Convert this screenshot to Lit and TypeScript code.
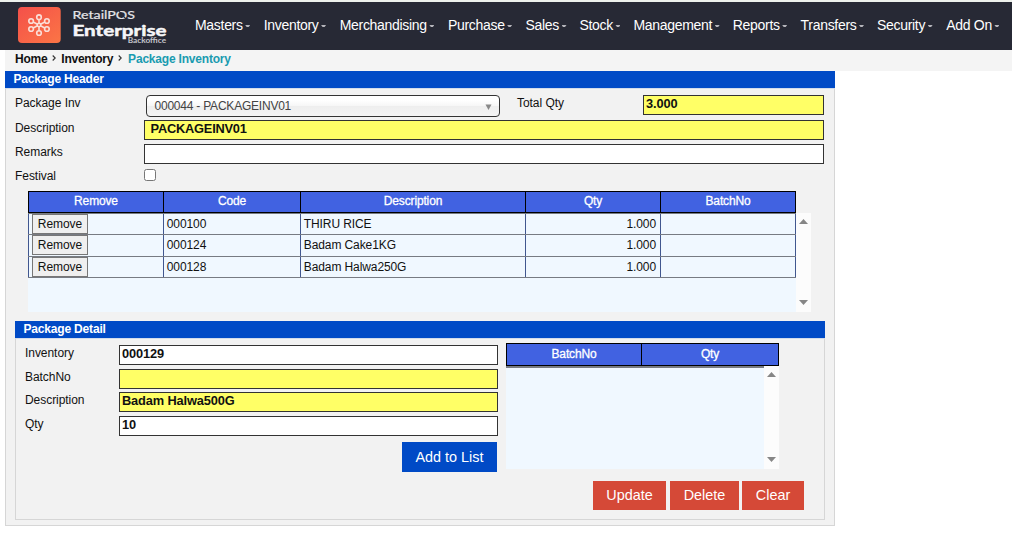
import { LitElement, html, css, svg } from "lit";
import { customElement } from "lit/decorators.js";

const MENU = [
  "Masters", "Inventory", "Merchandising", "Purchase", "Sales", "Stock",
  "Management", "Reports", "Transfers", "Security", "Add On",
];

const ROWS = [
  { code: "000100", name: "THIRU RICE", qty: "1.000", batch: "" },
  { code: "000124", name: "Badam Cake1KG", qty: "1.000", batch: "" },
  { code: "000128", name: "Badam Halwa250G", qty: "1.000", batch: "" },
];

@customElement("brand-logo")
class BrandLogo extends LitElement {
  static styles = css`
    :host { display: block; width: 150px; height: 40px; }
    svg { display: block; }
  `;
  render() {
    const cx = 21, cy = 18;
    const nodes = [[21, 10.2], [28.9, 14], [28.9, 22], [21, 26], [13.1, 22], [13.1, 14]];
    return html`
      <svg width="150" height="40" viewBox="0 0 150 40">
        <defs>
          <linearGradient id="tile" x1="0" y1="0" x2="1" y2="1">
            <stop offset="0" stop-color="#f4504a" />
            <stop offset="1" stop-color="#fb7545" />
          </linearGradient>
        </defs>
        <rect x="0" y="0" width="42.7" height="36" rx="4" fill="url(#tile)" />
        <g fill="none" stroke="#fbdfd8" stroke-width="1.6">
          ${nodes.map(([x, y]) => {
            const dx = x - cx, dy = y - cy, d = Math.hypot(dx, dy);
            return svg`
              <circle cx=${x} cy=${y} r="2.3" />
              <line x1=${cx + (dx / d) * 1.7} y1=${cy + (dy / d) * 1.7}
                x2=${x - (dx / d) * 2.3} y2=${y - (dy / d) * 2.3} />`;
          })}
          <circle cx=${cx} cy=${cy} r="1.7" />
        </g>
        <text x="54.5" y="12.2" font-family="Lato, sans-serif" font-size="11" fill="#e4e4e8"
          stroke="#e4e4e8" stroke-width=".2" textLength="62.5" lengthAdjust="spacingAndGlyphs">RetailPOS</text>
        <path d="M100.6 4l2.6 2.4M106 9.8l2 2" stroke="#272935" stroke-width="1.1" />
        <text x="54.5" y="28.8" font-family="Lato, sans-serif" font-size="15.4" font-weight="700" fill="#f6f6f8"
          stroke="#f6f6f8" stroke-width=".5" textLength="94" lengthAdjust="spacingAndGlyphs">Enterprise</text>
        <text x="109.7" y="36.3" font-family="Lato, sans-serif" font-size="7" font-weight="700" fill="#c4c4cb"
          textLength="38.4" lengthAdjust="spacingAndGlyphs">Backoffice</text>
      </svg>`;
  }
}

@customElement("scroll-rail")
class ScrollRail extends LitElement {
  static styles = css`
    :host { display: flex; flex-direction: column; justify-content: space-between;
      align-items: center; width: 15px; box-sizing: border-box; padding: 6px 0 7px; background: #fcfcfc; }
    svg { display: block; }
  `;
  render() {
    return html`
      <svg width="9" height="5"><path d="M0 5 4.5 0 9 5z" fill="#868686" /></svg>
      <svg width="9" height="5"><path d="M0 0 4.5 5 9 0z" fill="#868686" /></svg>`;
  }
}

@customElement("app-root")
class AppRoot extends LitElement {
  static styles = css`
    :host { display: block; height: 546px; overflow: hidden; background: #fff;
      font: 12px/14px "Liberation Sans", Arial, sans-serif; color: #111; }
    * { box-sizing: border-box; }
    .top { height: 50px; border-top: 2px solid #edf1ec; background: #272935; display: flex; }
    brand-logo { margin: 5px 0 0 18px; flex: none; }
    .menu { display: grid; margin-left: 27px; padding-top: 14px; height: 34px;
      grid-template-columns: 68.7px 76px 108.2px 77.6px 54px 54px 99.3px 67.8px 76.4px 69.3px 60px; }
    .item { display: flex; font-size: 14px; line-height: 18px; letter-spacing: -0.3px; color: #fff; white-space: nowrap; }
    .caret { width: 5px; height: 2px; margin: 9px 0 0 2.5px; background: #b5b5bb; clip-path: polygon(0 0, 100% 0, 70% 100%, 30% 100%); }
    .crumbs { margin-left: 5px; height: 21px; padding: 2px 0 0 10px; background: #f4f4f4; display: flex;
      font-weight: bold; letter-spacing: -0.25px; }
    .sep { width: 4px; height: 6px; margin: 3px 5px 0 5px; }
    .here { color: #1a9bb0; margin-left: 1px; letter-spacing: -0.2px; }
    .panel { width: 830px; height: 455px; margin-left: 5px; background: #f2f2f2; }
    .bar { height: 17px; padding: 1px 0 0 8.5px; background: #004ac6; color: #fff; font-weight: bold; letter-spacing: -0.18px; }
    .body { height: 438px; border: 1px solid #d6d6d6; border-top-color: #d3dceb; padding: 6px 9px 0; }
    .fields { display: grid; grid-template-columns: 129px 373px 126px 181px; grid-template-rows: 25px 24px 24px 23px; }
    .label { padding-top: 1px; letter-spacing: -0.05px; }
    .box { height: 20px; border: 1px solid #333; background: #fff; padding: 0 2px;
      font-size: 12.8px; line-height: 15px; font-weight: bold; letter-spacing: -0.13px; color: #111; white-space: nowrap; }
    .y { background: #ffff66; }
    .wide { grid-column: 2 / 5; }
    .indent { padding-left: 5.5px; letter-spacing: -0.2px; }
    .select { width: 354px; height: 22px; margin-left: 2px; border: 1px solid #333; border-radius: 4px;
      background: linear-gradient(#fff 20%, #f6f6f6 50%, #eee 52%, #f4f4f4 100%);
      display: flex; justify-content: space-between; padding: 3px 7px 0 7.5px; color: #444; letter-spacing: -0.22px; }
    .select svg { margin-top: 5px; }
    .check { width: 12px; height: 12px; border: 1px solid #767676; border-radius: 2.5px; background: #fff; }
    .fields .check { margin-top: 0.5px; }
    .grid { display: flex; margin: 0 0 9px 13px; height: 121px; }
    .list { width: 768px; background: #f0f8ff; }
    .grid scroll-rail { margin-top: 22px; }
    .cols { display: grid; grid-template-columns: 136px 137px 225px 135px 135px; }
    .head { height: 22px; border: solid #000; border-width: 1px 0; background: #4162e1; color: #fff;
      text-align: center; letter-spacing: -0.15px; -webkit-text-stroke: 0.3px #fff; }
    .head .c { border-right: 1px solid #000; padding-top: 2px; }
    .head .c:first-child { border-left: 1px solid #000; }
    .row { height: 22px; border-bottom: 1px solid #777b83; letter-spacing: -0.1px; }
    .row.first { border-top: 1px solid #777b83; }
    .row.last { height: 21px; }
    .row .c { border-right: 1px solid #41578f; padding: 3px 3px 0 2.8px; }
    .row .c:first-child { border-left: 1px solid #41578f; padding: 0 0 0 3px; }
    .row .num { text-align: right; padding-right: 4px; }
    .remove { display: block; width: 56px; height: 20px; border: 1px solid #777; background: #efefef;
      padding: 0; font: inherit; letter-spacing: -0.05px; color: #111; text-align: center; }
    .detail { height: 199px; background: #f2f2f2; }
    .inner { height: 182px; border: 1px solid #d6d6d6; border-top-color: #d3dceb; padding: 4px 20px 0 9px; }
    .split { display: flex; height: 138px; }
    .left { width: 473px; margin-right: 8px; padding-top: 2px; }
    .form { display: grid; grid-template-columns: 94px 379px; grid-template-rows: 24px 23px 24px 26px; }
    .btn { display: block; border: 0; padding: 0; color: #fff; font: 14.4px/16px "Liberation Sans", Arial, sans-serif; }
    .add { width: 95px; height: 30px; margin-left: 377px; background: #004ac6; }
    .right { width: 273px; height: 126px; display: flex; flex-direction: column; }
    .right .head { height: 23px; grid-template-columns: 136px 137px; }
    .right .head .c { padding-top: 3px; }
    .well { display: flex; height: 103px; }
    .empty { width: 258px; border-top: 2px solid #777b83; background: #f0f8ff; }
    .actions { display: flex; justify-content: flex-end; }
    .red { height: 29px; padding-bottom: 1px; background: #d54937; }
    .update { width: 73px; margin-right: 4px; }
    .delete { width: 69px; margin-right: 3px; }
    .clear { width: 62px; }
  `;

  sep() {
    return html`<svg class="sep" viewBox="0 0 4 6"><path d="M.7.5 3.2 3 .7 5.5" fill="none" stroke="#333" stroke-width="1.1" /></svg>`;
  }

  render() {
    return html`
      <div class="top">
        <brand-logo></brand-logo>
        <nav class="menu">
          ${MENU.map((m) => html`<div class="item"><span>${m}</span><span class="caret"></span></div>`)}
        </nav>
      </div>
      <div class="crumbs">
        <span>Home</span>${this.sep()}<span>Inventory</span>${this.sep()}<span class="here">Package Inventory</span>
      </div>
      <div class="panel">
        <div class="bar">Package Header</div>
        <div class="body">
          <div class="fields">
            <div class="label">Package Inv</div>
            <div class="select"><span>000044 - PACKAGEINV01</span>
              <svg width="7" height="6"><path d="M.5.5h6L3.5 6z" fill="#888" /></svg></div>
            <div class="label">Total Qty</div>
            <div class="box y">3.000</div>
            <div class="label">Description</div>
            <div class="box y wide indent">PACKAGEINV01</div>
            <div class="label">Remarks</div>
            <div class="box wide"></div>
            <div class="label">Festival</div>
            <div class="check"></div>
          </div>
          <div class="grid">
            <div class="list">
              <div class="cols head">
                ${["Remove", "Code", "Description", "Qty", "BatchNo"].map((h) => html`<div class="c">${h}</div>`)}
              </div>
              ${ROWS.map((r, i) => html`
                <div class="cols row ${i === 0 ? "first" : i === 2 ? "last" : ""}">
                  <div class="c"><button class="remove">Remove</button></div>
                  <div class="c">${r.code}</div>
                  <div class="c">${r.name}</div>
                  <div class="c num">${r.qty}</div>
                  <div class="c">${r.batch}</div>
                </div>`)}
            </div>
            <scroll-rail></scroll-rail>
          </div>
          <div class="detail">
            <div class="bar">Package Detail</div>
            <div class="inner">
              <div class="split">
                <div class="left">
                  <div class="form">
                    <div class="label">Inventory</div><div class="box">000129</div>
                    <div class="label">BatchNo</div><div class="box y"></div>
                    <div class="label">Description</div><div class="box y">Badam Halwa500G</div>
                    <div class="label">Qty</div><div class="box">10</div>
                  </div>
                  <button class="btn add">Add to List</button>
                </div>
                <div class="right">
                  <div class="cols head"><div class="c">BatchNo</div><div class="c">Qty</div></div>
                  <div class="well"><div class="empty"></div><scroll-rail></scroll-rail></div>
                </div>
              </div>
              <div class="actions">
                <button class="btn red update">Update</button>
                <button class="btn red delete">Delete</button>
                <button class="btn red clear">Clear</button>
              </div>
            </div>
          </div>
        </div>
      </div>`;
  }
}
